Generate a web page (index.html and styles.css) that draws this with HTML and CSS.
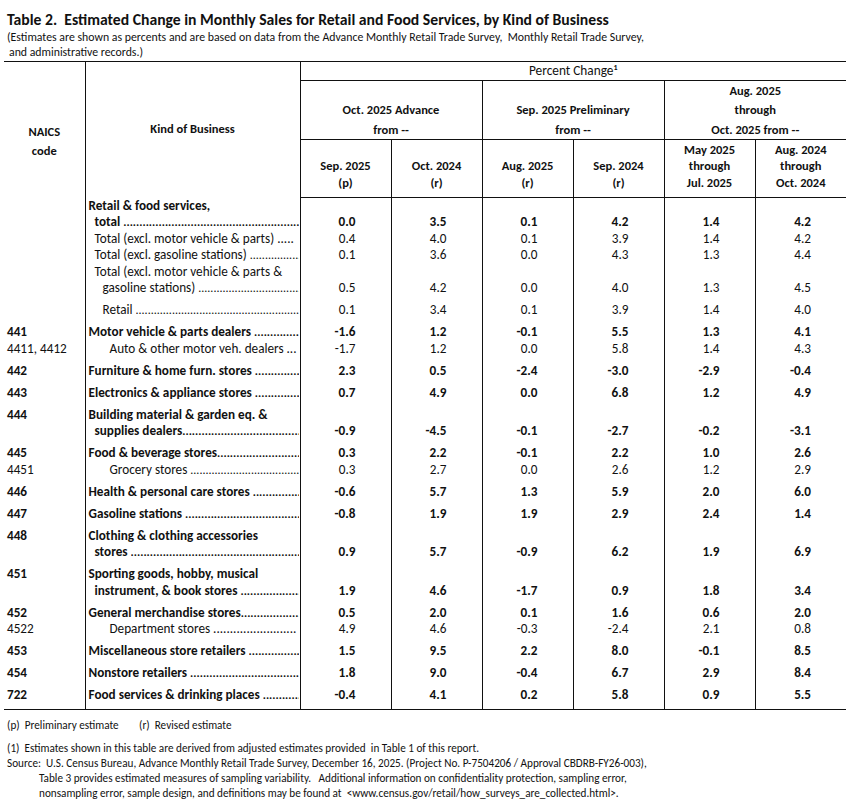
FILE: index.html
```html
<!DOCTYPE html>
<html>
<head>
<meta charset="utf-8">
<title>Table 2</title>
<link rel="stylesheet" href="styles.css">
</head>
<body>
<div class="page">
  <h1 class="title">Table 2.&nbsp; Estimated Change in Monthly Sales for Retail and Food Services, by Kind of Business</h1>
  <p class="sub">(Estimates are shown as percents and are based on data from the Advance Monthly Retail Trade Survey,&nbsp; Monthly Retail Trade Survey,</p>
  <p class="sub sub2">and administrative records.)</p>

  <table class="tbl">
    <colgroup>
      <col class="c-code"><col class="c-kind">
      <col class="c-val"><col class="c-val"><col class="c-val"><col class="c-val"><col class="c-val"><col class="c-val">
    </colgroup>
    <thead>
      <tr class="h1">
        <th class="h-code" rowspan="3"><div>NAICS</div><div>code</div></th>
        <th class="h-kind" rowspan="3">Kind of Business</th>
        <th class="h-pc" colspan="6">Percent Change<sup>1</sup></th>
      </tr>
      <tr class="h2">
        <th colspan="2"><div>Oct. 2025 Advance</div><div>from --</div></th>
        <th colspan="2"><div>Sep. 2025 Preliminary</div><div>from --</div></th>
        <th colspan="2"><div>Aug. 2025</div><div>through</div><div>Oct. 2025 from --</div></th>
      </tr>
      <tr class="h3">
        <th><div>Sep. 2025</div><div>(p)</div></th>
        <th><div>Oct. 2024</div><div>(r)</div></th>
        <th><div>Aug. 2025</div><div>(r)</div></th>
        <th><div>Sep. 2024</div><div>(r)</div></th>
        <th><div>May 2025</div><div>through</div><div>Jul. 2025</div></th>
        <th><div>Aug. 2024</div><div>through</div><div>Oct. 2024</div></th>
      </tr>
    </thead>
    <tbody>
      <tr class="b">
        <td class="code"></td>
        <td class="kind"><div class="ln">Retail &amp; food services,</div><div class="ln lead i1"><span class="tx">total </span><span class="dt"></span></div></td>
        <td>0.0</td><td>3.5</td><td>0.1</td><td>4.2</td><td>1.4</td><td>4.2</td>
      </tr>
      <tr>
        <td class="code"></td>
        <td class="kind"><div class="ln i1">Total (excl. motor vehicle &amp; parts) .....</div></td>
        <td>0.4</td><td>4.0</td><td>0.1</td><td>3.9</td><td>1.4</td><td>4.2</td>
      </tr>
      <tr>
        <td class="code"></td>
        <td class="kind"><div class="ln lead i1"><span class="tx">Total (excl. gasoline stations) </span><span class="dt"></span></div></td>
        <td>0.1</td><td>3.6</td><td>0.0</td><td>4.3</td><td>1.3</td><td>4.4</td>
      </tr>
      <tr>
        <td class="code"></td>
        <td class="kind"><div class="ln i1">Total (excl. motor vehicle &amp; parts &amp;</div><div class="ln lead i2"><span class="tx">gasoline stations) </span><span class="dt"></span></div></td>
        <td>0.5</td><td>4.2</td><td>0.0</td><td>4.0</td><td>1.3</td><td>4.5</td>
      </tr>
      <tr class="sp">
        <td class="code"></td>
        <td class="kind"><div class="ln lead i2"><span class="tx">Retail </span><span class="dt"></span></div></td>
        <td>0.1</td><td>3.4</td><td>0.1</td><td>3.9</td><td>1.4</td><td>4.0</td>
      </tr>
      <tr class="sp b">
        <td class="code">441</td>
        <td class="kind"><div class="ln lead"><span class="tx">Motor vehicle &amp; parts dealers </span><span class="dt"></span></div></td>
        <td>-1.6</td><td>1.2</td><td>-0.1</td><td>5.5</td><td>1.3</td><td>4.1</td>
      </tr>
      <tr>
        <td class="code">4411, 4412</td>
        <td class="kind"><div class="ln i3">Auto &amp; other motor veh. dealers ...</div></td>
        <td>-1.7</td><td>1.2</td><td>0.0</td><td>5.8</td><td>1.4</td><td>4.3</td>
      </tr>
      <tr class="sp b">
        <td class="code">442</td>
        <td class="kind"><div class="ln lead"><span class="tx">Furniture &amp; home furn. stores </span><span class="dt"></span></div></td>
        <td>2.3</td><td>0.5</td><td>-2.4</td><td>-3.0</td><td>-2.9</td><td>-0.4</td>
      </tr>
      <tr class="sp b">
        <td class="code">443</td>
        <td class="kind"><div class="ln lead"><span class="tx">Electronics &amp; appliance stores </span><span class="dt"></span></div></td>
        <td>0.7</td><td>4.9</td><td>0.0</td><td>6.8</td><td>1.2</td><td>4.9</td>
      </tr>
      <tr class="sp b">
        <td class="code">444</td>
        <td class="kind"><div class="ln">Building material &amp; garden eq. &amp;</div><div class="ln lead i1"><span class="tx">supplies dealers</span><span class="dt"></span></div></td>
        <td>-0.9</td><td>-4.5</td><td>-0.1</td><td>-2.7</td><td>-0.2</td><td>-3.1</td>
      </tr>
      <tr class="sp b">
        <td class="code">445</td>
        <td class="kind"><div class="ln lead"><span class="tx">Food &amp; beverage stores</span><span class="dt"></span></div></td>
        <td>0.3</td><td>2.2</td><td>-0.1</td><td>2.2</td><td>1.0</td><td>2.6</td>
      </tr>
      <tr>
        <td class="code">4451</td>
        <td class="kind"><div class="ln lead i3"><span class="tx">Grocery stores </span><span class="dt"></span></div></td>
        <td>0.3</td><td>2.7</td><td>0.0</td><td>2.6</td><td>1.2</td><td>2.9</td>
      </tr>
      <tr class="sp b">
        <td class="code">446</td>
        <td class="kind"><div class="ln lead"><span class="tx">Health &amp; personal care stores </span><span class="dt"></span></div></td>
        <td>-0.6</td><td>5.7</td><td>1.3</td><td>5.9</td><td>2.0</td><td>6.0</td>
      </tr>
      <tr class="sp b">
        <td class="code">447</td>
        <td class="kind"><div class="ln lead"><span class="tx">Gasoline stations </span><span class="dt"></span></div></td>
        <td>-0.8</td><td>1.9</td><td>1.9</td><td>2.9</td><td>2.4</td><td>1.4</td>
      </tr>
      <tr class="sp b">
        <td class="code">448</td>
        <td class="kind"><div class="ln">Clothing &amp; clothing accessories</div><div class="ln lead i1"><span class="tx">stores </span><span class="dt"></span></div></td>
        <td>0.9</td><td>5.7</td><td>-0.9</td><td>6.2</td><td>1.9</td><td>6.9</td>
      </tr>
      <tr class="sp b">
        <td class="code">451</td>
        <td class="kind"><div class="ln">Sporting goods, hobby, musical</div><div class="ln lead i1"><span class="tx">instrument, &amp; book stores </span><span class="dt"></span></div></td>
        <td>1.9</td><td>4.6</td><td>-1.7</td><td>0.9</td><td>1.8</td><td>3.4</td>
      </tr>
      <tr class="sp b">
        <td class="code">452</td>
        <td class="kind"><div class="ln lead"><span class="tx">General merchandise stores</span><span class="dt"></span></div></td>
        <td>0.5</td><td>2.0</td><td>0.1</td><td>1.6</td><td>0.6</td><td>2.0</td>
      </tr>
      <tr>
        <td class="code">4522</td>
        <td class="kind"><div class="ln i3">Department stores .........................</div></td>
        <td>4.9</td><td>4.6</td><td>-0.3</td><td>-2.4</td><td>2.1</td><td>0.8</td>
      </tr>
      <tr class="sp b">
        <td class="code">453</td>
        <td class="kind"><div class="ln lead"><span class="tx">Miscellaneous store retailers </span><span class="dt"></span></div></td>
        <td>1.5</td><td>9.5</td><td>2.2</td><td>8.0</td><td>-0.1</td><td>8.5</td>
      </tr>
      <tr class="sp b">
        <td class="code">454</td>
        <td class="kind"><div class="ln lead"><span class="tx">Nonstore retailers </span><span class="dt"></span></div></td>
        <td>1.8</td><td>9.0</td><td>-0.4</td><td>6.7</td><td>2.9</td><td>8.4</td>
      </tr>
      <tr class="sp b last">
        <td class="code">722</td>
        <td class="kind"><div class="ln lead"><span class="tx">Food services &amp; drinking places </span><span class="dt"></span></div></td>
        <td>-0.4</td><td>4.1</td><td>0.2</td><td>5.8</td><td>0.9</td><td>5.5</td>
      </tr>
    </tbody>
  </table>

  <div class="notes">
    <p class="legend"><span class="lg1">(p)&nbsp; Preliminary estimate</span><span>(r)&nbsp; Revised estimate</span></p>
    <p class="fn">(1)&nbsp; Estimates shown in this table are derived from adjusted estimates provided&nbsp; in Table 1 of this report.</p>
    <p class="fn">Source:&nbsp; U.S. Census Bureau, Advance Monthly Retail Trade Survey, December 16, 2025. (Project No. P-7504206 / Approval CBDRB-FY26-003),</p>
    <p class="fn ind">Table 3 provides estimated measures of sampling variability.&nbsp;&nbsp; Additional information on confidentiality protection, sampling error,</p>
    <p class="fn ind">nonsampling error, sample design, and definitions may be found at&nbsp; &lt;www.census.gov/retail/how_surveys_are_collected.html&gt;.</p>
  </div>
</div>
</body>
</html>
```

FILE: styles.css
```css
html, body {
  margin: 0;
  padding: 0;
  background: #ffffff;
}

body {
  font-family: Carlito, Calibri, "Open Sans", "Liberation Sans", sans-serif;
  color: #111111;
}

.page {
  padding: 10px 0 0 0;
}

.title {
  margin: 0 0 0 7px;
  font-size: 15.7px;
  line-height: 20px;
  font-weight: 700;
}

.sub {
  margin: 0 0 0 7px;
  font-size: 11.8px;
  line-height: 15px;
}

.sub2 {
  margin-left: 9px;
}

.tbl {
  margin: 1px 0 0 4px;
  border-collapse: collapse;
  table-layout: fixed;
  width: 842px;
  font-size: 13.2px;
}

.c-code { width: 81px; }
.c-kind { width: 215px; }
.c-val { width: 91px; }

.tbl th {
  font-weight: 700;
  font-size: 12.5px;
  text-align: center;
  padding: 0;
  border-left: 1px solid #111;
}

.tbl thead tr.h1 th {
  border-top: 1px solid #111;
}

.h-code {
  border-left: none !important;
  vertical-align: top;
  padding-top: 60px !important;
  line-height: 19px;
}

.h-kind {
  vertical-align: top;
  padding-top: 59px !important;
  line-height: 16px;
}

.h-pc {
  font-weight: 400 !important;
  font-size: 13.3px !important;
  height: 18px;
  line-height: 18px;
  border-bottom: 1px solid #111;
}

.h-pc sup {
  font-size: 8px;
  font-weight: 700;
  line-height: 0;
  vertical-align: 5px;
}

.h2 th {
  height: 58px;
  vertical-align: bottom;
  line-height: 19.3px;
  border-bottom: 1px solid #111;
}

.h3 th {
  height: 51px;
  vertical-align: bottom;
  line-height: 16.5px;
  padding-bottom: 6px;
  border-bottom: 1px solid #111;
}

.tbl td {
  padding: 0;
  border-left: 1px solid #111;
  line-height: 16.5px;
  text-align: right;
  padding-right: 35px;
  vertical-align: bottom;
  white-space: nowrap;
}

.tbl td.code {
  border-left: none;
  text-align: left;
  padding: 0 0 0 3px;
  vertical-align: top;
}

.tbl td.kind {
  text-align: left;
  padding: 0 1px 0 3px;
  vertical-align: top;
}

.tbl tr.sp td {
  padding-top: 5.5px;
}

.tbl tr.b td {
  font-weight: 700;
}

.tbl tr.last td {
  padding-bottom: 5.5px;
  border-bottom: 1px solid #111;
}

.ln {
  white-space: nowrap;
}

.lead {
  display: flex;
}

.lead .tx {
  flex: none;
  white-space: pre;
}

.lead .dt {
  flex: 1 1 auto;
  overflow: hidden;
  white-space: nowrap;
  font-size: 12px;
}

.lead .dt::before {
  content: "................................................................................................................................................";
}

.i1 { padding-left: 6px; }
.i2 { padding-left: 14px; }
.i3 { padding-left: 21px; }

.notes {
  margin-top: 8px;
  font-size: 11.2px;
}

.notes p {
  margin: 0 0 0 7px;
  line-height: 15px;
}

.legend {
  margin-bottom: 8px !important;
}

.lg1 {
  display: inline-block;
  width: 132px;
}

.fn.ind {
  margin-left: 39px;
}
```
